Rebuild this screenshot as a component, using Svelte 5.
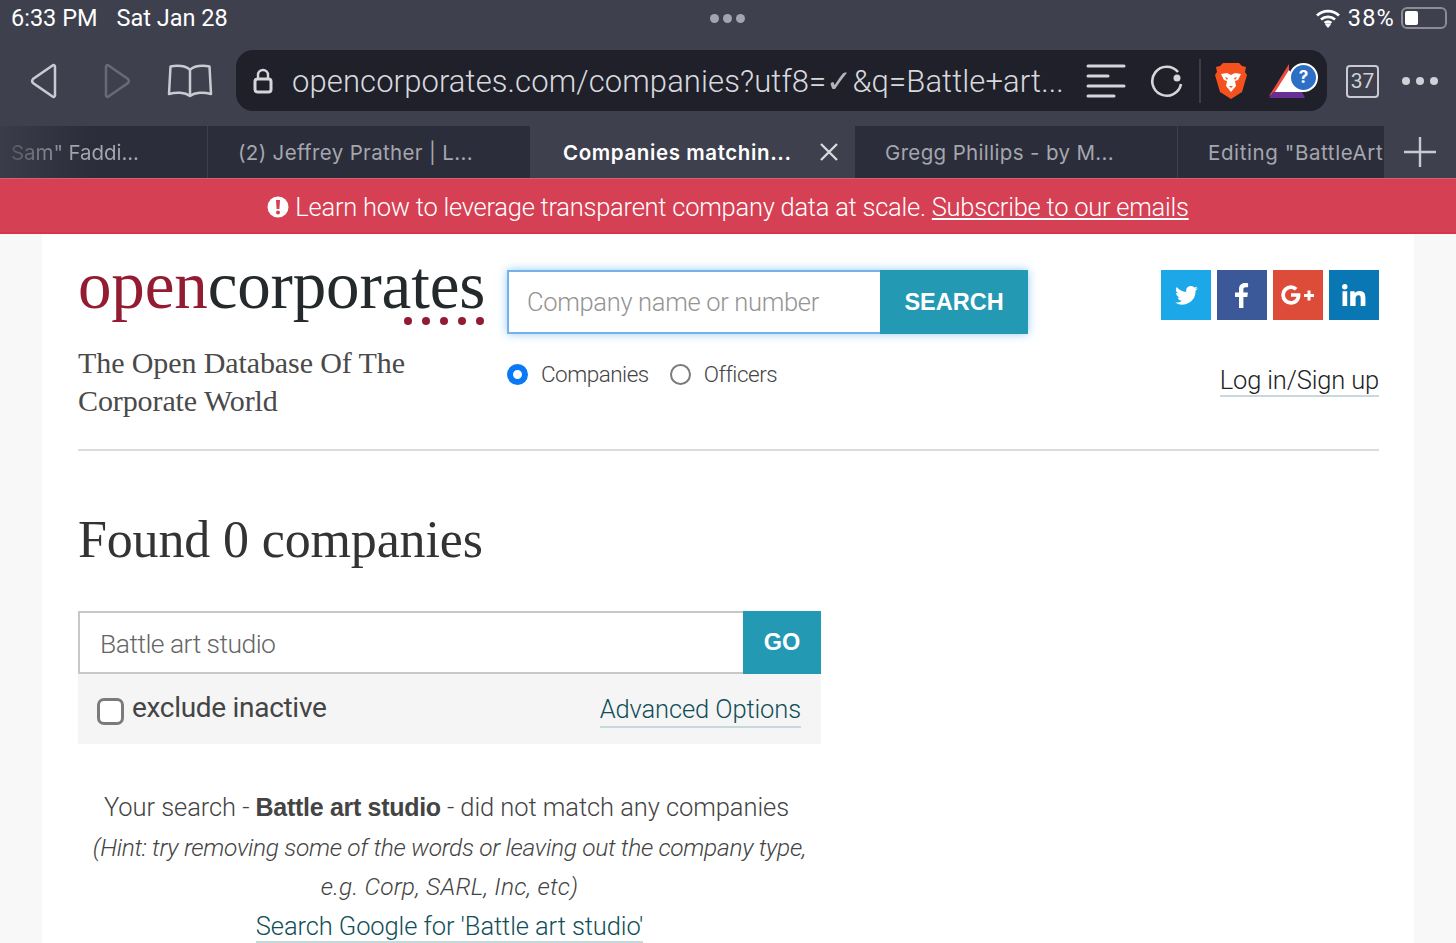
<script>
  const tabs = [
    { label: 'Sam" Faddi...', cls: 'first' },
    { label: '(2) Jeffrey Prather | L...' },
    { label: 'Companies matchin...', active: true },
    { label: 'Gregg Phillips - by M...' },
    { label: 'Editing "BattleArt', cls: 'last' }
  ];
</script>

<div class="chrome">
  <div class="status">
    <div class="clock"><span>6:33 PM</span><span>Sat Jan 28</span></div>
    <div class="dots"><i></i><i></i><i></i></div>
    <div class="sys">
      <svg width="26" height="20" viewBox="0 0 26 20"><path d="M2 7.500a16 16 0 0 1 22 0M6 11.500a10.400 10.400 0 0 1 14 0M9.700 15a5 5 0 0 1 6.600 0" fill="none" stroke="#fff" stroke-width="2.800"/><path d="M13 20l-3-3.400a4.400 4.400 0 0 1 6 0z" fill="#fff"/></svg>
      <span class="pct">38%</span>
      <div class="battery"><b></b></div>
    </div>
  </div>

  <div class="toolbar">
    <svg class="nav" width="30" height="36" viewBox="0 0 30 36"><path d="M26 3.500v29a1.500 1.500 0 0 1-2.500 1L4 20a3 3 0 0 1 0-4L23.500 2.500a1.500 1.500 0 0 1 2.500 1z" fill="none" stroke="#c9cad2" stroke-width="2.500"/></svg>
    <svg class="nav fwd" width="30" height="36" viewBox="0 0 30 36"><path d="M4 3.500v29a1.500 1.500 0 0 0 2.500 1L26 20a3 3 0 0 0 0-4L6.500 2.500A1.500 1.500 0 0 0 4 3.500z" fill="none" stroke="#686a78" stroke-width="2.500"/></svg>
    <svg class="nav book" width="46" height="36" viewBox="0 0 46 36"><path d="M23 7C19 2.500 10 2 3.500 3.500L2 31c7-2 16-2 21 2 5-4 14-4 21-2L42.500 3.500C36 2 27 2.500 23 7zM23 7v26" fill="none" stroke="#c9cad2" stroke-width="2.500" stroke-linejoin="round"/></svg>

    <div class="url">
      <svg class="lock" width="20" height="26" viewBox="0 0 20 26"><path d="M5 11V7a5 5 0 0 1 10 0v4" fill="none" stroke="#d5d6dc" stroke-width="2.400"/><rect x="2" y="11" width="16" height="13" rx="2.500" fill="none" stroke="#d5d6dc" stroke-width="3"/></svg>
      <span class="addr">opencorporates.com/companies?utf8=<span class="tick">✓</span>&amp;q=Battle+art...</span>
      <svg class="reader" width="40" height="34" viewBox="0 0 40 34"><g stroke="#d5d6dc" stroke-width="3" stroke-linecap="round"><path d="M2 2h36M2 12h20M2 22h36M2 32h26"/></g></svg>
      <svg class="reload" width="34" height="34" viewBox="0 0 34 34"><path d="M28 8A14.500 14.500 0 1 0 31 20" fill="none" stroke="#d5d6dc" stroke-width="2.600"/><circle cx="27" cy="14" r="3.500" fill="#d5d6dc"/></svg>
      <div class="sep"></div>
      <svg class="brave" width="32" height="38" viewBox="0 0 32 38"><path d="M8 1h16l3 3 4 1-1 5 2 3-5 17-11 7-11-7L0 13l2-3-1-5 4-1z" fill="#f4511e"/><path d="M6 12l6-1 4 2 4-2 6 1-3 6-3 1 1 5-5 6-5-6 1-5-3-1z" fill="#fff"/><path d="M10 15l3 1-1 2zM22 15l-3 1 1 2zM14 24h4l-2 2z" fill="#f4511e"/></svg>
      <div class="bat">
        <svg width="46" height="38" viewBox="0 0 46 38"><path d="M2 34L22 2v22z" fill="#ef4b3c"/><path d="M2 36h36l-3-6H6z" fill="#6a2f96"/><path d="M22 8L37 30H8z" fill="#fff"/></svg>
        <span class="qm">?</span>
      </div>
    </div>

    <div class="count">37</div>
    <div class="more"><i></i><i></i><i></i></div>
  </div>

  <div class="tabs">
    {#each tabs as t}
      <div class="tab {t.cls ?? ''}" class:active={t.active}>
        <span>{t.label}</span>
        {#if t.active}
          <svg width="20" height="20" viewBox="0 0 20 20"><path d="M2 2l16 16M18 2L2 18" stroke="#d8d9de" stroke-width="2.400"/></svg>
        {/if}
      </div>
    {/each}
    <div class="plus">
      <svg width="32" height="30" viewBox="0 0 32 30"><path d="M0 15h32M16 0v30" stroke="#c9cad2" stroke-width="2.400"/></svg>
    </div>
  </div>
</div>

<div class="banner">
  <svg width="22" height="22" viewBox="0 0 22 22"><circle cx="11" cy="11" r="10.500" fill="#fff"/><path d="M9 4h4l-.6 9H9.600z" fill="#d64054"/><circle cx="11" cy="16.500" r="2" fill="#d64054"/></svg>
  <span>Learn how to leverage transparent company data at scale. <a href="#top">Subscribe to our emails</a></span>
</div>

<main class="site">
  <header class="head">
    <div class="brand">
      <div class="logo"><span class="red">open</span>corporates</div>
      <div class="logo-dots"><i></i><i></i><i></i><i></i><i></i></div>
      <p class="tagline">The Open Database Of The<br />Corporate World</p>
    </div>

    <div class="finder">
      <div class="searchbox">
        <div class="field">Company name or number</div>
        <div class="searchbtn">SEARCH</div>
      </div>
      <div class="radios">
        <label class="radio"><span class="dot on"></span>Companies</label>
        <label class="radio"><span class="dot"></span>Officers</label>
      </div>
    </div>

    <div class="account">
      <div class="social">
        <div class="sq tw">
          <svg width="23" height="19" viewBox="0 0 24 20"><path d="M24 2.400a9.800 9.800 0 0 1-2.800.8A4.900 4.900 0 0 0 23.300.5a9.800 9.800 0 0 1-3.100 1.200 4.900 4.900 0 0 0-8.400 4.500A14 14 0 0 1 1.700 1a4.900 4.900 0 0 0 1.500 6.600 4.900 4.900 0 0 1-2.200-.6c0 2.400 1.700 4.400 3.900 4.900a4.900 4.900 0 0 1-2.200.1 4.900 4.900 0 0 0 4.600 3.400A9.900 9.900 0 0 1 0 17.400 14 14 0 0 0 21.500 5c1-.7 1.900-1.600 2.500-2.600z" fill="#fff"/></svg>
        </div>
        <div class="sq fb">
          <svg width="14" height="25" viewBox="0 0 14 25"><path d="M4 25V14H0v-4.500h4V6.200C4 2.300 6.300 0 9.900 0c1.500 0 2.800.1 3.200.2v4.100h-2.400c-1.900 0-2.300.9-2.300 2.300v2.900h4.500l-.6 4.500H8.400v11z" fill="#fff"/></svg>
        </div>
        <div class="sq gp">
          <svg width="34" height="20" viewBox="0 0 34 20"><path d="M10 8.200v3.500h5.500c-.6 2.500-2.600 4.300-5.500 4.300a6 6 0 1 1 0-12c1.600 0 2.900.6 3.900 1.500L16.500 3A9.800 9.800 0 0 0 10 .2 9.800 9.800 0 1 0 10 19.800c5.600 0 9.400-3.900 9.400-9.500 0-.7-.1-1.400-.2-2.100z" fill="#fff"/><path d="M26.500 5.500h3v3.500H33v3h-3.500v3.500h-3V12H23V9h3.500z" fill="#fff"/></svg>
        </div>
        <div class="sq li">
          <svg width="24" height="22" viewBox="0 0 24 22"><circle cx="2.800" cy="2.800" r="2.700" fill="#fff"/><path d="M.500 7.300h4.700V22H.500zM8.200 7.300h4.500v2c.7-1.300 2.400-2.400 4.800-2.400 4.800 0 5.900 3.100 5.900 7.200V22h-4.700v-7c0-1.700 0-3.800-2.300-3.800s-2.800 1.800-2.800 3.700V22H8.200z" fill="#fff"/></svg>
        </div>
      </div>
      <a class="login" href="#top">Log in/Sign up</a>
    </div>
  </header>

  <h1>Found 0 companies</h1>

  <section class="results">
    <div class="refine">
      <div class="refine-field">Battle art studio</div>
      <div class="gobtn">GO</div>
    </div>
    <div class="options">
      <label class="exclude"><span class="check"></span>exclude inactive</label>
      <a class="adv" href="#top">Advanced Options</a>
    </div>
    <div class="message">
      <p class="first">Your search - <strong>Battle art studio</strong> - did not match any companies</p>
      <p><em>(Hint: try removing some of the words or leaving out the company type,</em></p>
      <p><em class="eg">e.g. Corp, SARL, Inc, etc)</em></p>
      <p><a href="#top">Search Google for 'Battle art studio'</a></p>
    </div>
  </section>
</main>

<style>
  :global(body) {
    background: #f8f8f8;
    height: 943px;
    overflow: hidden;
    font-family: Roboto, "Liberation Sans", Arial, sans-serif;
    font-weight: 300;
  }

  a { text-decoration: none; color: inherit; }
  p { margin: 0; }

  /* browser chrome */
  .chrome { background: #3e404e; color: #fff; font-family: Inter, "Liberation Sans", sans-serif; font-weight: 400; }

  .status {
    height: 36px;
    display: grid;
    grid-template-columns: 1fr auto 1fr;
    align-items: center;
    padding: 0 9px 0 11px;
    font-family: Roboto, sans-serif;
    font-size: 23.500px;
  }
  .clock { display: flex; gap: 19px; }
  .dots { display: flex; gap: 4px; margin-left: -4px; }
  .dots i { width: 9px; height: 9px; border-radius: 50%; background: #a3a4ad; }
  .sys { display: flex; justify-content: flex-end; align-items: center; gap: 8px; }
  .sys svg { margin-right: -1px; }
  .pct { letter-spacing: 1.200px; margin-right: -1px; }
  .battery {
    width: 46px;
    height: 22px;
    margin-left: -1px;
    border: 2px solid #8b8c96;
    border-radius: 6px;
    padding: 2px;
    box-sizing: border-box;
  }
  .battery b { display: block; width: 13px; height: 100%; background: #fff; border-radius: 2px; }

  .toolbar {
    height: 90px;
    display: flex;
    align-items: center;
    padding: 0 0 0 29px;
    box-sizing: border-box;
  }
  .nav { flex: none; margin-top: -1px; }
  .fwd { margin-left: 43px; }
  .book { margin-left: 35px; margin-right: 23px; }

  .url {
    width: 1091px;
    height: 61px;
    margin-top: -1px;
    flex: none;
    display: flex;
    align-items: center;
    background: #1f2029;
    border-radius: 17px;
    padding-left: 17px;
    box-sizing: border-box;
  }
  .addr {
    font-family: Roboto, sans-serif;
    font-size: 31px;
    font-weight: 300;
    color: #d8d9df;
    margin-left: 19px;
    width: 794px;
    white-space: nowrap;
    letter-spacing: .1px;
    margin-top: 2px;
  }
  .tick { opacity: .8; }
  .reader { flex: none; }
  .reload { flex: none; margin-left: 24px; }
  .sep { width: 2px; height: 44px; background: #3c3d49; margin-left: 15px; }
  .brave { flex: none; margin-left: 14px; }
  .bat { position: relative; width: 46px; height: 38px; margin-left: 20px; }
  .qm {
    position: absolute;
    right: -5px;
    top: 1px;
    width: 25px;
    height: 25px;
    border-radius: 50%;
    background: #2d6fc4;
    border: 2px solid #fff;
    color: #fff;
    font-size: 17px;
    font-weight: 700;
    text-align: center;
    line-height: 25px;
  }
  .count {
    width: 33px;
    height: 33px;
    margin-left: 19px;
    border: 2px solid #c9cad2;
    border-radius: 4px;
    box-sizing: border-box;
    text-align: center;
    line-height: 29px;
    font-family: Roboto, sans-serif;
    font-size: 21px;
    color: #d0d1d7;
    flex: none;
  }
  .more { display: flex; gap: 6px; margin-left: 23px; }
  .more i { width: 8px; height: 8px; border-radius: 50%; background: #d0d1d7; }

  .tabs { height: 52px; display: flex; }
  .tab {
    width: 323px;
    flex: none;
    display: flex;
    align-items: center;
    padding-left: 30px;
    box-sizing: border-box;
    background: #2b2d3a;
    border-right: 1px solid #3e404e;
    color: #a5a6ae;
    font-size: 20.500px;
    letter-spacing: .35px;
    white-space: nowrap;
    overflow: hidden;
  }
  .tab.first {
    width: 208px;
    padding-left: 11px;
    background: linear-gradient(90deg, #3a3c4a, #2b2d3a 45%);
  }
  .tab.first span {
    background: linear-gradient(90deg, #55565f, #a5a6ae 50%);
    background-clip: text;
    -webkit-background-clip: text;
    color: transparent;
  }
  .tab.last { width: 206px; border-right: 0; letter-spacing: .6px; }
  .tab.active {
    background: #3e404e;
    color: #fff;
    font-weight: 600;
    padding-left: 32px;
    gap: 27px;
    border-right: 0;
    width: 324px;
    letter-spacing: .6px;
  }
  .tab.active svg { flex: none; }
  .plus { flex: 1; display: flex; align-items: center; justify-content: center; }

  .banner {
    height: 56px;
    display: flex;
    align-items: center;
    justify-content: center;
    gap: 6px;
    padding-top: 3px;
    background: #d64054;
    color: #fff;
    font-size: 25.500px;
    box-sizing: border-box;
    border-bottom: 2px solid #d93350;
    border-top: 1px solid #e05a6c;
    letter-spacing: -.25px;
  }
  .banner a { text-decoration: underline; }

  /* page */
  .site {
    width: 1372px;
    height: 709px;
    margin-left: 42px;
    padding: 36px 35px 0 36px;
    box-sizing: border-box;
    background: #fff;
    overflow: hidden;
  }

  .head {
    display: flex;
    height: 181px;
    border-bottom: 2px solid #dcdcdc;
    box-sizing: border-box;
  }
  .brand { width: 429px; flex: none; }
  .logo {
    font-family: "Liberation Serif", serif;
    font-size: 67px;
    line-height: 30px;
    height: 44px;
    color: #24292b;
    letter-spacing: -.15px;
    white-space: nowrap;
  }
  .red { color: #931c33; }
  .logo-dots { display: flex; gap: 10px; justify-content: flex-end; width: 406px; margin-top: 3px; height: 8px; }
  .logo-dots i { width: 8px; height: 8px; border-radius: 50%; background: #931c33; }
  .tagline {
    margin-top: 19px;
    font-family: "Liberation Serif", serif;
    font-weight: 400;
    font-size: 30px;
    line-height: 38px;
    color: #4a4a4a;
    letter-spacing: -.1px;
  }

  .finder { width: 521px; flex: none; }
  .searchbox {
    display: flex;
    height: 64px;
    box-shadow: 0 0 9px rgba(70, 160, 240, .55);
  }
  .field {
    flex: 1;
    display: flex;
    align-items: center;
    padding-left: 18px;
    border: 2px solid #73b3ea;
    border-right: 0;
    color: #949494;
    font-size: 25.500px;
    letter-spacing: -.32px;
  }
  .searchbtn {
    width: 148px;
    display: flex;
    align-items: center;
    justify-content: center;
    padding-top: 1px;
    background: #2499b3;
    color: #fff;
    font-family: "Liberation Sans", sans-serif;
    font-weight: 700;
    font-size: 23.500px;
  }
  .radios { display: flex; gap: 21px; margin-top: 27px; }
  .radio { display: flex; align-items: center; gap: 13px; font-size: 22.500px; color: #444; height: 26px; letter-spacing: -.5px; }
  .dot { border: 2.500px solid #7b7b7b; border-radius: 50%; box-sizing: content-box; width: 17px; height: 17px; }
  .dot.on { border: 6.500px solid #0a79f5; width: 9px; height: 9px; }

  .account { flex: 1; display: flex; flex-direction: column; align-items: flex-end; }
  .social { display: flex; gap: 6px; }
  .sq { width: 50px; height: 50px; display: flex; align-items: center; justify-content: center; }
  .tw { background: #1ca8e8; }
  .fb { background: #3b5998; }
  .gp { background: #dd4b39; }
  .li { background: #0a77b5; }
  .login {
    margin-top: 45px;
    font-size: 25.500px;
    line-height: 30px;
    color: #222;
    letter-spacing: -.15px;
    border-bottom: 2px solid #c9d8da;
  }

  h1 {
    margin: 58px 0 0;
    height: 62px;
    font-family: "Liberation Serif", serif;
    font-weight: 400;
    font-size: 52px;
    line-height: 62px;
    color: #333;
    letter-spacing: -.15px;
  }

  .results { width: 743px; margin-top: 40px; }
  .refine { display: flex; height: 63px; }
  .refine-field {
    flex: 1;
    display: flex;
    align-items: center;
    padding: 2px 0 0 20px;
    border: 2px solid #c8c8c8;
    border-right: 0;
    color: #666;
    font-size: 26.500px;
    letter-spacing: -.53px;
  }
  .gobtn {
    width: 78px;
    display: flex;
    align-items: center;
    justify-content: center;
    background: #2499b3;
    color: #fff;
    font-family: "Liberation Sans", sans-serif;
    font-weight: 700;
    font-size: 23.500px;
  }
  .options {
    height: 70px;
    display: flex;
    align-items: center;
    justify-content: space-between;
    padding: 0 20px 0 19px;
    background: #f5f5f5;
    box-sizing: border-box;
  }
  .exclude { display: flex; align-items: center; gap: 8px; font-size: 28px; font-weight: 400; color: #444; margin-top: -3px; letter-spacing: -.3px; }
  .check {
    width: 27px;
    height: 27px;
    margin-top: 7px;
    border: 3px solid #7b7b7b;
    border-radius: 7px;
    background: #fff;
    box-sizing: border-box;
  }
  .adv {
    font-size: 25.500px;
    line-height: 34px;
    color: #104f58;
    letter-spacing: -.12px;
    border-bottom: 2px solid #c5d8da;
    margin-top: 2px;
  }
  .message {
    margin-top: 44px;
    text-align: center;
    font-size: 25.500px;
    line-height: 39.600px;
    color: #444;
    white-space: nowrap;
  }
  .first { padding-right: 6px; letter-spacing: -.07px; }
  .message em { font-size: 24.500px; letter-spacing: -.32px; }
  .message em.eg { letter-spacing: .2px; }
  .message strong { font-weight: 700; font-family: "Liberation Sans", sans-serif; font-size: 25px; letter-spacing: -.3px; }
  .message a { color: #104f58; letter-spacing: -.1px; border-bottom: 2px solid #c5d8da; }
</style>
